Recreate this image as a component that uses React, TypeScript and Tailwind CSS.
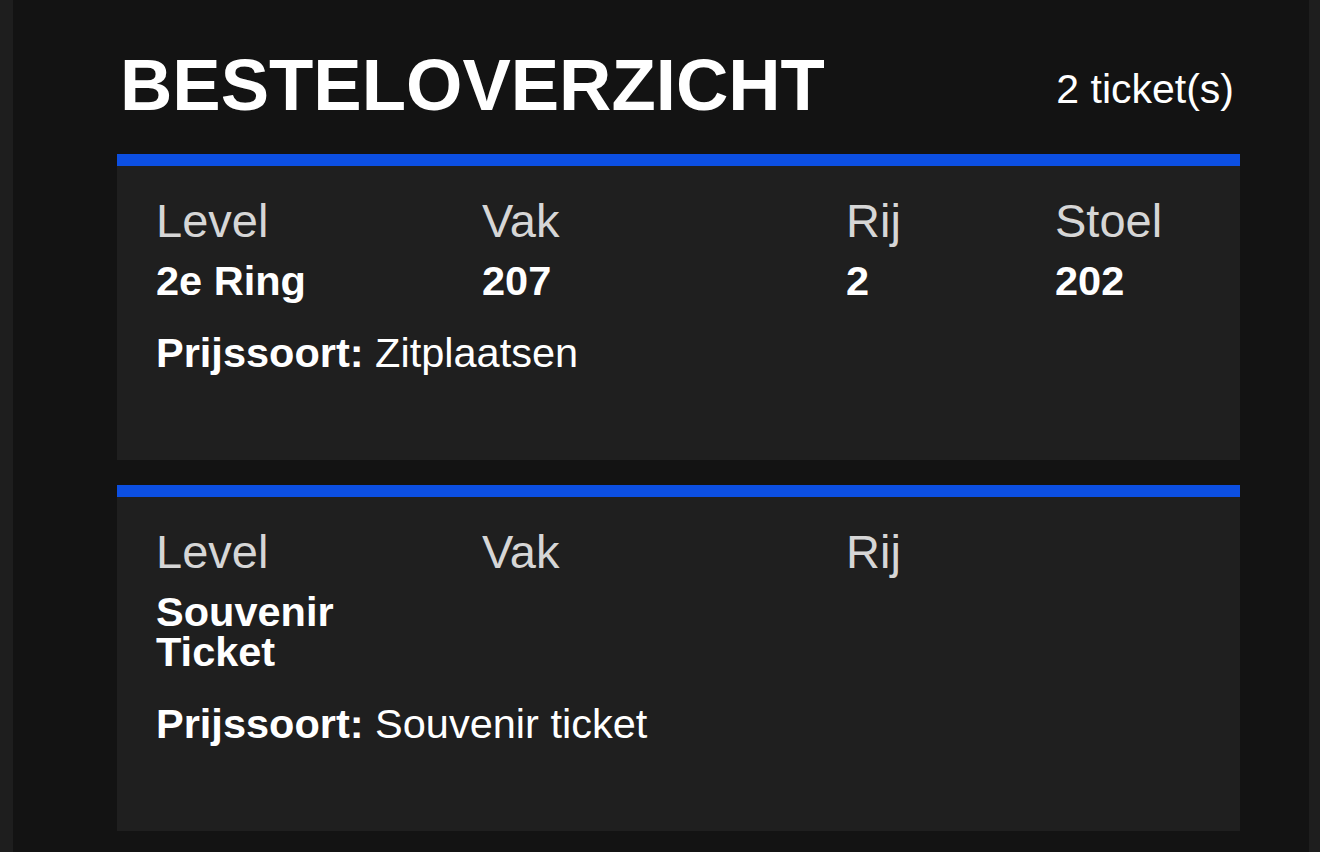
import React from "react";

type Col = { label: string; value?: string[] };
type Ticket = { cols: Col[]; price: string };

const tickets: Ticket[] = [
  {
    cols: [
      { label: "Level", value: ["2e Ring"] },
      { label: "Vak", value: ["207"] },
      { label: "Rij", value: ["2"] },
      { label: "Stoel", value: ["202"] },
    ],
    price: "Zitplaatsen",
  },
  {
    cols: [
      { label: "Level", value: ["Souvenir", "Ticket"] },
      { label: "Vak" },
      { label: "Rij" },
    ],
    price: "Souvenir ticket",
  },
];

function TicketCard({ t }: { t: Ticket }) {
  return (
    <div className="flex flex-col">
      <div className="h-[12px] bg-[#0c4fe2]" />
      <div className="bg-[#1f1f1f] pl-[39px] pr-[37px] pt-[32px] pb-[87px]">
        <div className="grid grid-cols-[326px_364px_209px_1fr]">
          {t.cols.map((c) => (
            <div key={c.label} className="flex flex-col">
              <div className="text-[47px] leading-[46px] text-[#d6d6d6]">{c.label}</div>
              <div className="mt-[17px] text-[41.5px] leading-[40px] font-bold text-white">
                {c.value
                  ? c.value.map((v) => <div key={v}>{v}</div>)
                  : <div>&nbsp;</div>}
              </div>
            </div>
          ))}
        </div>
        <div className="mt-[32px] text-[41.5px] leading-[40px] text-white">
          <span className="font-bold">Prijssoort:</span> {t.price}
        </div>
      </div>
    </div>
  );
}

export default function App() {
  return (
    <div
      className="flex min-h-screen w-full bg-[#1e1e1e]"
      style={{ fontFamily: '"Liberation Sans", Arial, Helvetica, sans-serif' }}
    >
      <div className="ml-[13px] mr-[11px] flex-1 bg-[#131313] pl-[104px] pr-[69px] pt-[49px]">
        <div className="flex items-start justify-between pr-[6px]">
          <h1 className="ml-[3px] text-[72.5px] leading-[72px] font-bold text-white">BESTELOVERZICHT</h1>
          <div className="mt-[20px] text-[41px] leading-[40px] text-white">2 ticket(s)</div>
        </div>
        <div className="mt-[33px] flex flex-col gap-[25px]">
          {tickets.map((t, i) => (
            <TicketCard key={i} t={t} />
          ))}
        </div>
      </div>
    </div>
  );
}
